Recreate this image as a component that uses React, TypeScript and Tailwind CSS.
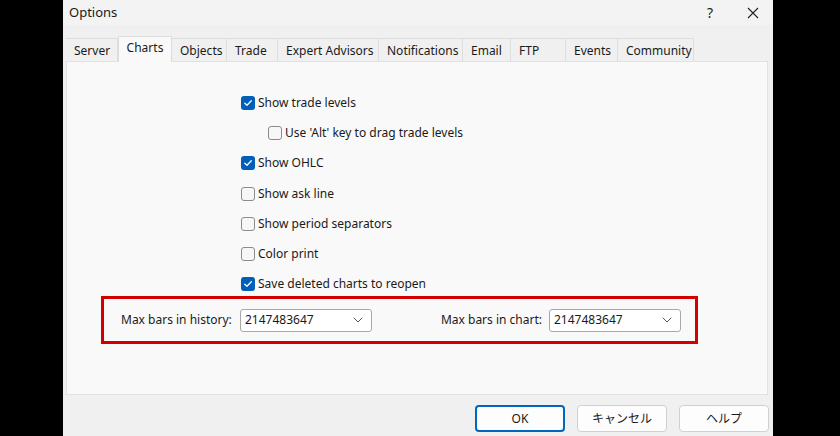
import React from 'react';

const TABS: { label: string; w: number }[] = [
  { label: 'Server', w: 52 },
  { label: 'Charts', w: 54 },
  { label: 'Objects', w: 55 },
  { label: 'Trade', w: 51 },
  { label: 'Expert Advisors', w: 101 },
  { label: 'Notifications', w: 84 },
  { label: 'Email', w: 48 },
  { label: 'FTP', w: 55 },
  { label: 'Events', w: 52 },
  { label: 'Community', w: 76 },
];

const OPTIONS: { label: string; checked: boolean; indent?: boolean }[] = [
  { label: 'Show trade levels', checked: true },
  { label: "Use 'Alt' key to drag trade levels", checked: false, indent: true },
  { label: 'Show OHLC', checked: true },
  { label: 'Show ask line', checked: false },
  { label: 'Show period separators', checked: false },
  { label: 'Color print', checked: false },
  { label: 'Save deleted charts to reopen', checked: true },
];

const Check: React.FC<{ checked: boolean }> = ({ checked }) =>
  checked ? (
    <span className="w-[14px] h-[14px] rounded-[3px] bg-[#005fb8] flex items-center justify-center">
      <svg width="10" height="10" viewBox="0 0 10 10" fill="none">
        <path d="M1.8 5.2L4 7.3L8.3 2.8" stroke="white" strokeWidth="1.3" strokeLinecap="round" strokeLinejoin="round" />
      </svg>
    </span>
  ) : (
    <span className="w-[14px] h-[14px] rounded-[3px] border border-[#8b8b8b] bg-[#f7f7f7]" />
  );

const Combo: React.FC<{ value: string }> = ({ value }) => (
  <div className="w-[132px] h-[23px] border border-[#a8a8a8] rounded-[3px] bg-white flex items-center justify-between pl-[4px] pr-[8px]">
    <span className="text-[12px] text-[#1a1a1a]">{value}</span>
    <svg width="10" height="6" viewBox="0 0 10 6" fill="none">
      <path d="M1 1L5 5L9 1" stroke="#555" strokeWidth="1" strokeLinecap="round" strokeLinejoin="round" />
    </svg>
  </div>
);

const Btn: React.FC<{ label: string; primary?: boolean }> = ({ label, primary }) => (
  <div
    className={
      'w-[90px] h-[27px] rounded-[4px] bg-[#fdfdfd] flex items-center justify-center text-[12px] text-[#1a1a1a] ' +
      (primary ? 'border-2 border-[#0067c0]' : 'border border-[#d0d0d0]')
    }
  >
    {label}
  </div>
);

export default function App() {
  return (
    <div
      className="w-[840px] h-[436px] bg-black flex overflow-hidden"
      style={{ fontFamily: '"Noto Sans", "Noto Sans CJK JP", sans-serif' }}
    >
      <div className="ml-[63px] w-[710px] h-full bg-[#f0f0f0] flex flex-col">
        {/* title bar */}
        <div className="h-[25px] flex items-center justify-between pl-[6px] pr-[14px] bg-[#f3f3f3]">
          <span className="text-[13px] text-[#1a1a1a]">Options</span>
          <div className="flex items-center gap-[34px] text-[#1a1a1a]">
            <span className="text-[14px]">?</span>
            <svg width="12" height="12" viewBox="0 0 12 12">
              <path d="M1 1L11 11M11 1L1 11" stroke="#222" strokeWidth="1.1" />
            </svg>
          </div>
        </div>

        {/* tabs */}
        <div className="mt-[12px] pl-[3px] flex items-end h-[24px] relative z-10">
          {TABS.map((t) =>
            t.label === 'Charts' ? (
              <div
                key={t.label}
                style={{ width: t.w }}
                className="h-[26px] -mb-[1px] bg-[#f9f9f9] border border-b-0 border-[#dcdcdc] flex items-start pt-[2px] justify-center text-[12px] text-[#1a1a1a]"
              >
                {t.label}
              </div>
            ) : (
              <div
                key={t.label}
                style={{ width: t.w }}
                className="h-[23px] bg-[#f0f0f0] border border-b-0 border-l-0 border-[#dedede] flex items-center pl-[8px] pt-[1px] text-[12px] text-[#1a1a1a]"
              >
                {t.label}
              </div>
            )
          )}
        </div>

        {/* panel */}
        <div className="ml-[3px] mr-[5px] h-[334px] bg-[#f9f9f9] border border-[#e2e2e2] flex flex-col">
          <div className="pl-[174px] pt-[33px] flex flex-col gap-[14px]">
            {OPTIONS.map((o) => (
              <div key={o.label} className={'h-[16.2px] flex items-center gap-[3px] ' + (o.indent ? 'pl-[27px]' : '')}>
                <Check checked={o.checked} />
                <span className="text-[12px] text-[#1a1a1a]">{o.label}</span>
              </div>
            ))}
          </div>

          <div className="ml-[34px] mt-[4px] w-[597px] h-[48px] border-[3px] border-[#d40000] flex items-center">
            <span className="ml-[17px] w-[119px] text-[12px] text-[#1a1a1a]">Max bars in history:</span>
            <Combo value="2147483647" />
            <span className="ml-auto mr-[7px] text-[12px] text-[#1a1a1a]">Max bars in chart:</span>
            <Combo value="2147483647" />
            <span className="w-[14px]" />
          </div>
        </div>

        {/* buttons */}
        <div className="mt-[10px] flex justify-end gap-[12px] pr-[4px]">
          <Btn label="OK" primary />
          <Btn label="キャンセル" />
          <Btn label="ヘルプ" />
        </div>
      </div>
    </div>
  );
}
